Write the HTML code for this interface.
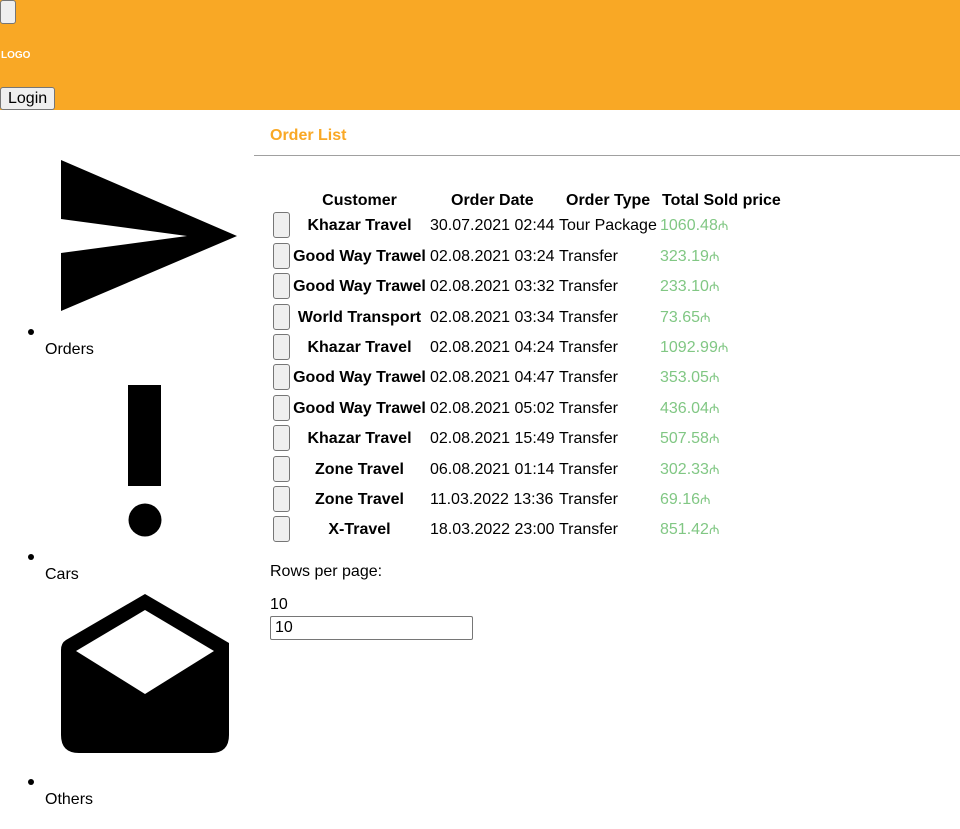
<!DOCTYPE html>
<html><head><meta charset="utf-8"><style>
*{margin:0;padding:0;box-sizing:border-box}
body{width:960px;height:829px;position:relative;font-family:"Liberation Sans",Arial,sans-serif;font-size:16px;color:#000;background:#fff;overflow:hidden}
.hdr{position:absolute;left:0;top:0;width:960px;height:110px;background:#F9A825}
.btn{position:absolute;background:#efefef;border:1px solid #767676;border-radius:3px}
.abs{position:absolute;white-space:nowrap;line-height:18px}
.r{position:absolute;left:270px;height:30px;width:520px}
.r .cb{position:absolute;left:3px;top:-12px;width:17px;height:26px;background:#efefef;border:1px solid #767676;border-radius:3px}
.r span{position:absolute;top:-7px;white-space:nowrap;line-height:18px;height:18px}
.c1{left:21px;width:137px;text-align:center;font-weight:bold}
.c2{left:160px}
.c3{left:289px}
.c4{left:390px;color:#81c784}
.c4 i{font-style:normal;font-size:13px;line-height:18px;display:inline-block;height:18px;vertical-align:top}
.dot{position:absolute;width:6px;height:6px;border-radius:50%;background:#000;left:28px}
</style></head><body>
<div class="hdr"></div>
<div class="btn" style="left:0;top:0;width:16px;height:24px"></div>
<div class="abs" style="left:1px;top:47px;font-size:10px;font-weight:bold;color:#fff">LOGO</div>
<div class="btn" style="left:0;top:87px;width:55px;height:23px;font-size:16px;line-height:21px;padding-left:7px">Login</div>

<svg class="abs" style="left:0;top:150px" width="250" height="620" viewBox="0 150 250 620">
<polygon points="61,160 237,236 61,311 61,253 187,236 61,219" fill="#000"/>
<rect x="128" y="385" width="33" height="101" fill="#000"/>
<circle cx="145" cy="520" r="16.5" fill="#000"/>
<path d="M145,594 L229,643 Q229,643 229,650 L229,735 Q229,753 211,753 L79,753 Q61,753 61,735 L61,650 Q61,643 66,640 Z" fill="#000"/>
<polygon points="76,651 145,610 214,651 145,694" fill="#fff"/>
</svg>
<div class="dot" style="top:329px"></div><div class="abs" style="left:45px;top:341px">Orders</div>
<div class="dot" style="top:554px"></div><div class="abs" style="left:45px;top:566px">Cars</div>
<div class="dot" style="top:779px"></div><div class="abs" style="left:45px;top:791px">Others</div>

<div class="abs" style="left:270px;top:127px;color:#F9A825;font-weight:bold">Order List</div>
<div class="abs" style="left:254px;top:155px;width:706px;height:1px;background:#a0a0a0"></div>

<div class="r" style="top:199px;font-weight:bold">
<span class="c1">Customer</span><span style="left:181px">Order Date</span><span style="left:296px">Order Type</span><span style="left:392px">Total Sold price</span></div>

<div class="r" style="top:224px"><div class="cb"></div><span class="c1">Khazar Travel</span><span class="c2">30.07.2021 02:44</span><span class="c3">Tour Package</span><span class="c4">1060.48<i>₼</i></span></div>
<div class="r" style="top:255px"><div class="cb"></div><span class="c1">Good Way Trawel</span><span class="c2">02.08.2021 03:24</span><span class="c3">Transfer</span><span class="c4">323.19<i>₼</i></span></div>
<div class="r" style="top:285px"><div class="cb"></div><span class="c1">Good Way Trawel</span><span class="c2">02.08.2021 03:32</span><span class="c3">Transfer</span><span class="c4">233.10<i>₼</i></span></div>
<div class="r" style="top:316px"><div class="cb"></div><span class="c1">World Transport</span><span class="c2">02.08.2021 03:34</span><span class="c3">Transfer</span><span class="c4">73.65<i>₼</i></span></div>
<div class="r" style="top:346px"><div class="cb"></div><span class="c1">Khazar Travel</span><span class="c2">02.08.2021 04:24</span><span class="c3">Transfer</span><span class="c4">1092.99<i>₼</i></span></div>
<div class="r" style="top:376px"><div class="cb"></div><span class="c1">Good Way Trawel</span><span class="c2">02.08.2021 04:47</span><span class="c3">Transfer</span><span class="c4">353.05<i>₼</i></span></div>
<div class="r" style="top:407px"><div class="cb"></div><span class="c1">Good Way Trawel</span><span class="c2">02.08.2021 05:02</span><span class="c3">Transfer</span><span class="c4">436.04<i>₼</i></span></div>
<div class="r" style="top:437px"><div class="cb"></div><span class="c1">Khazar Travel</span><span class="c2">02.08.2021 15:49</span><span class="c3">Transfer</span><span class="c4">507.58<i>₼</i></span></div>
<div class="r" style="top:468px"><div class="cb"></div><span class="c1">Zone Travel</span><span class="c2">06.08.2021 01:14</span><span class="c3">Transfer</span><span class="c4">302.33<i>₼</i></span></div>
<div class="r" style="top:498px"><div class="cb"></div><span class="c1">Zone Travel</span><span class="c2">11.03.2022 13:36</span><span class="c3">Transfer</span><span class="c4">69.16<i>₼</i></span></div>
<div class="r" style="top:528px"><div class="cb"></div><span class="c1">X-Travel</span><span class="c2">18.03.2022 23:00</span><span class="c3">Transfer</span><span class="c4">851.42<i>₼</i></span></div>

<div class="abs" style="left:270px;top:563px">Rows per page:</div>
<div class="abs" style="left:270px;top:596px">10</div>
<div class="abs" style="left:270px;top:616px;width:203px;height:24px;border:1px solid #767676;border-radius:2px;padding-left:4px;line-height:22px">10</div>
</body></html>
